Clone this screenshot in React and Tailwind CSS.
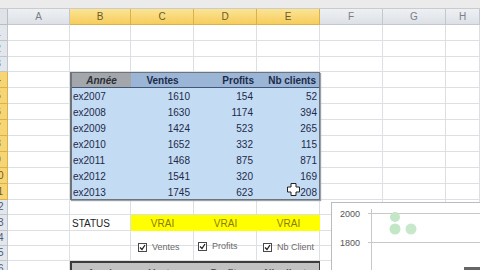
import React from 'react';

const cols = ['A', 'B', 'C', 'D', 'E', 'F', 'G', 'H'];
const hotCols = ['B', 'C', 'D', 'E'];

// sheet rows after the column header
const sheetRows = [1, 2, 3, 4, 5, 6, 7, 8, 9, 10, 11, 12, 13, 14, 15, 16];

const data = [
  ['ex2007', 1610, 154, 52],
  ['ex2008', 1630, 1174, 394],
  ['ex2009', 1424, 523, 265],
  ['ex2010', 1652, 332, 115],
  ['ex2011', 1468, 875, 871],
  ['ex2012', 1541, 320, 169],
  ['ex2013', 1745, 623, 208],
];

const CheckBox = ({ label, className }) => (
  <div className={`absolute flex items-center gap-[5px] ${className}`}>
    <div className="w-[9px] h-[9px] border border-[#4a4a4a] bg-white flex items-center justify-center">
      <svg width="7" height="7" viewBox="0 0 7 7">
        <path d="M1 3.5 L3 5.5 L6 1" stroke="#222" strokeWidth="1.3" fill="none" />
      </svg>
    </div>
    <span className="text-[9px] text-[#6a6a6a] leading-none">{label}</span>
  </div>
);

const App = () => {
  return (
    <div
      className="relative w-[480px] h-[270px] overflow-hidden bg-white"
      style={{ fontFamily: '"Liberation Sans", Arial, sans-serif' }}
    >
      {/* formula bar edge */}
      <div className="h-[9px] bg-[#ebebeb] border-b border-[#c9cbce]" />

      <div className="grid grid-cols-[8px_62px_61px_63px_63px_63px_63px_63px_1fr] grid-rows-[16px_16px_16px_15px_16px_16px_16px_16px_16px_16px_16px_16px_15px_16px_15px_15px_16px]">
        {/* column header */}
        <div className="row-start-1 col-start-1 bg-[#dfe3e8] border-r border-b border-[#b8bec6]" />
        {cols.map((c, i) => (
          <div
            key={c}
            style={{ gridColumnStart: i + 2 }}
            className={`row-start-1 flex items-center justify-center text-[10px] border-r border-b ${
              hotCols.includes(c)
                ? 'bg-gradient-to-b from-[#fbe493] to-[#f6cc5c] border-[#d9b24a] text-[#6b5a2a]'
                : 'bg-gradient-to-b from-[#eef0f3] to-[#dde1e7] border-[#c3c8cf] text-[#7a7f88]'
            }`}
          >
            {c}
          </div>
        ))}

        {/* row headers (scrolled, only the right edge shows) + empty cells */}
        {sheetRows.map((r) => (
          <React.Fragment key={r}>
            <div
              style={{ gridRowStart: r + 1 }}
              className={`col-start-1 overflow-hidden flex items-center justify-end text-[10px] leading-none border-r border-b ${
                r >= 4 && r <= 11
                  ? 'bg-[#f8d574] border-[#d9b24a] text-[#6b5a2a]'
                  : 'bg-[#e3e7ec] border-[#bfc5cd] text-[#4c5a78]'
              }`}
            >
              <span className="shrink-0 w-[18px] text-center whitespace-nowrap">{r}</span>
            </div>
            {cols.map((c, i) => (
              <div
                key={c}
                style={{ gridRowStart: r + 1, gridColumnStart: i + 2 }}
                className="border-r border-b border-[#dcdfe3]"
              />
            ))}
          </React.Fragment>
        ))}

        {/* main table */}
        <div className="row-start-5 row-span-8 col-start-3 col-span-4 relative border-l-2 border-t border-r border-b border-[#6f737a] shadow-[1px_1px_1px_#9aa0a8] grid grid-cols-[59px_63px_63px_62px] grid-rows-[15px_repeat(7,16px)] text-[10px] text-[#1d2a48] bg-[#c4dbf4]">
          <div className="bg-[#a3a6ab] border-b border-[#42577a] flex items-center justify-center font-bold italic text-[#2a2f38]">Année</div>
          <div className="bg-[#9bb5d7] border-b border-[#42577a] flex items-center justify-center font-bold">Ventes</div>
          <div className="bg-[#9bb5d7] border-b border-[#42577a] flex items-center justify-end pr-[3px] font-bold">Profits</div>
          <div className="bg-[#9bb5d7] border-b border-[#42577a] flex items-center justify-end pr-[3px] font-bold">Nb clients</div>
          {data.map((row) => (
            <React.Fragment key={row[0]}>
              <div className="flex items-center pl-[1px]">{row[0]}</div>
              <div className="flex items-center justify-end pr-[4px]">{row[1]}</div>
              <div className="flex items-center justify-end pr-[4px]">{row[2]}</div>
              <div className="flex items-center justify-end pr-[2px]">{row[3]}</div>
            </React.Fragment>
          ))}
        </div>

        {/* status row */}
        <div className="row-start-14 col-start-3 flex items-center pl-[2px] text-[10px] text-[#222]">STATUS</div>
        {[4, 5, 6].map((c) => (
          <div
            key={c}
            style={{ gridColumnStart: c }}
            className="row-start-14 bg-[#ffff00] flex items-center justify-center text-[10px] text-[#8c7b0c]"
          >
            VRAI
          </div>
        ))}

        {/* second table header, cut off */}
        <div className="row-start-17 col-start-3 col-span-4 border-t-2 border-l-2 border-r border-[#3c3c3c] bg-[#c2c2c2] grid grid-cols-4 text-[10px] font-bold text-[#555] overflow-hidden">
          <div className="text-center pt-[3px]">Année</div>
          <div className="text-center pt-[3px]">Ventes</div>
          <div className="text-center pt-[3px]">Profits</div>
          <div className="text-center pt-[3px]">Nb clients</div>
        </div>
      </div>

      {/* form checkboxes */}
      <CheckBox label="Ventes" className="left-[138px] top-[243px]" />
      <CheckBox label="Profits" className="left-[198px] top-[242px]" />
      <CheckBox label="Nb Client" className="left-[263px] top-[243px]" />

      {/* chart */}
      <div className="absolute left-[331px] top-[202px] w-[160px] h-[80px] bg-white border border-[#b9bcc0]">
        <div className="absolute left-[8px] top-[5px] text-[9px] text-[#555]">2000</div>
        <div className="absolute left-[8px] top-[34px] text-[9px] text-[#555]">1800</div>
        <div className="absolute left-[36px] top-[10px] w-[130px] h-px bg-[#c8c8c8]" />
        <div className="absolute left-[36px] top-[39px] w-[130px] h-px bg-[#c8c8c8]" />
        <div className="absolute left-[39px] top-[6px] w-px h-[80px] bg-[#c8c8c8]" />
        <svg className="absolute left-[52px] top-[4px]" width="40" height="30">
          <circle cx="11" cy="10" r="5" fill="#c2e6c6" />
          <circle cx="11" cy="22" r="5.5" fill="#c2e6c6" />
          <circle cx="27" cy="22" r="5.5" fill="#c8e8cc" />
        </svg>
        <div className="absolute left-[132px] top-[64px] w-[20px] h-[6px] bg-[#666]" />
      </div>

      {/* fat cross cursor */}
      <svg className="absolute left-[287px] top-[183px]" width="13" height="13" viewBox="0 0 13 13">
        <path
          d="M4 0.5 H9 V4 H12.5 V9 H9 V12.5 H4 V9 H0.5 V4 H4 Z"
          fill="#fff"
          stroke="#222"
          strokeWidth="1"
        />
      </svg>
    </div>
  );
};

export default App;
